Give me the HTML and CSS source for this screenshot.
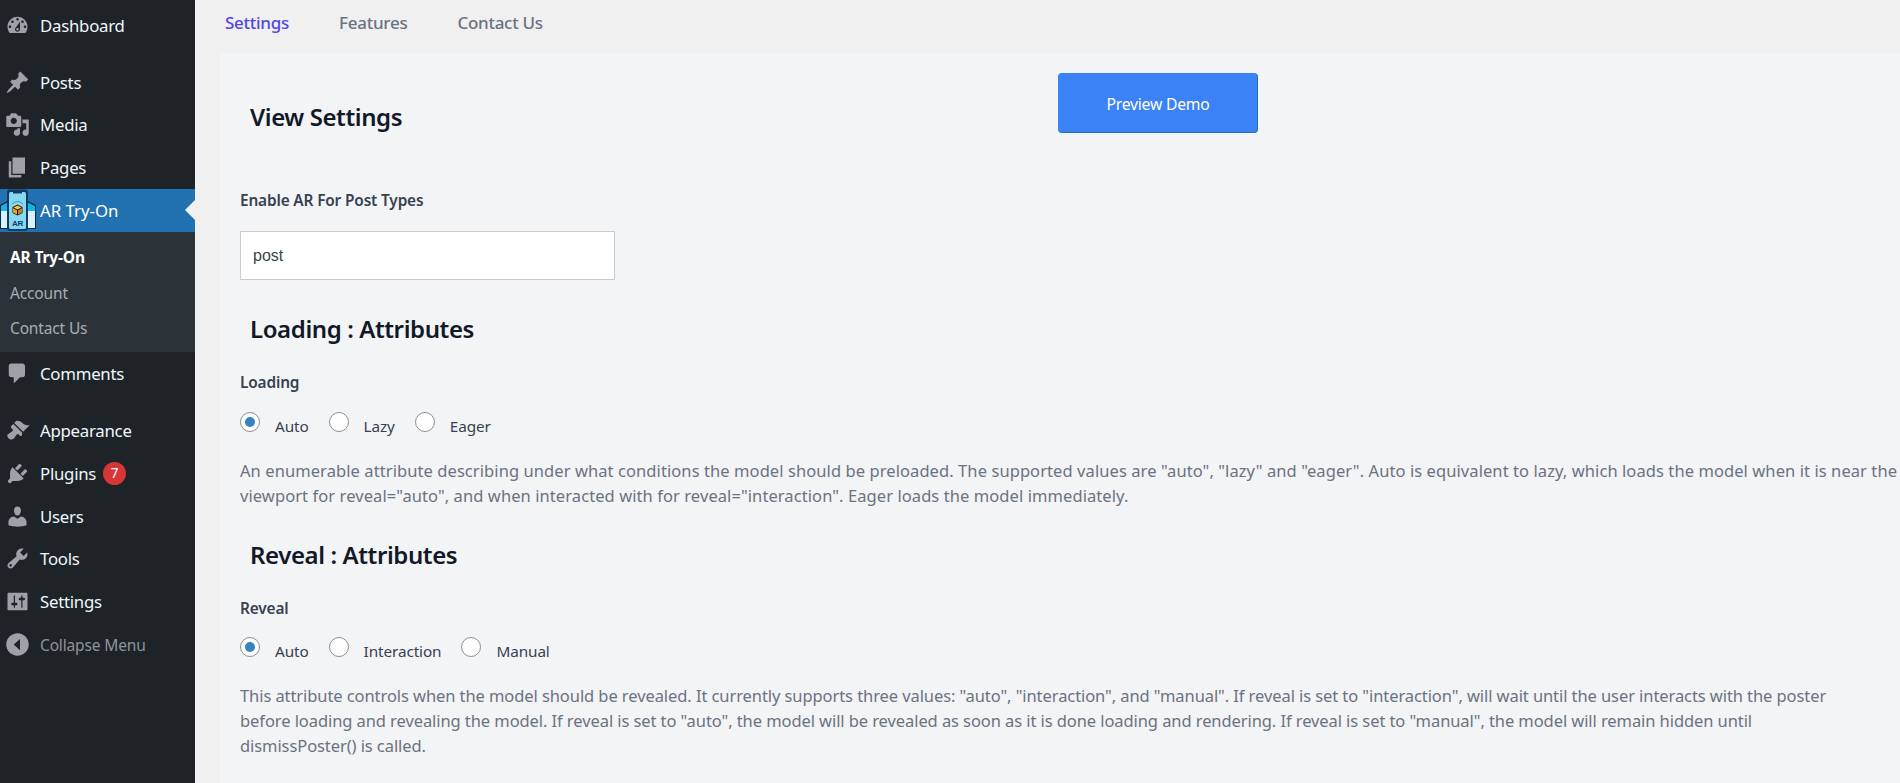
FILE: index.html
```html
<!DOCTYPE html>
<html lang="en">
<head>
<meta charset="utf-8">
<title>AR Try-On</title>
<link rel="stylesheet" href="styles.css">
</head>
<body>
<div class="shell">
  <nav class="sidebar">
    <ul class="menu">
      <li class="item sep-after"><svg class="ico" viewBox="0 0 20 20"><path fill-rule="evenodd" d="M3.76 16h12.48c1.1-1.37 1.76-3.11 1.76-5 0-4.42-3.58-8-8-8s-8 3.58-8 8c0 1.89.66 3.63 1.76 5zM10 4c.55 0 1 .45 1 1s-.45 1-1 1-1-.45-1-1 .45-1 1-1zM6 6c.55 0 1 .45 1 1s-.45 1-1 1-1-.45-1-1 .45-1 1-1zm8 0c.55 0 1 .45 1 1s-.45 1-1 1-1-.45-1-1 .45-1 1-1zm-5.37 5.55L12 7v6c0 1.1-.9 2-2 2s-2-.9-2-2c0-.57.24-1.08.63-1.45zM4 10c.55 0 1 .45 1 1s-.45 1-1 1-1-.45-1-1 .45-1 1-1zm12 0c.55 0 1 .45 1 1s-.45 1-1 1-1-.45-1-1 .45-1 1-1zm-5 3c0-.55-.45-1-1-1s-1 .45-1 1 .45 1 1 1 1-.45 1-1z"/></svg><span>Dashboard</span></li>
      <li class="item"><svg class="ico" viewBox="0 0 20 20"><path d="M10.44 3.02l1.82-1.82 6.36 6.35-1.83 1.82c-1.05-.68-2.48-.57-3.41.36l-.75.75c-.92.93-1.04 2.35-.35 3.41l-1.83 1.82-2.41-2.41-2.8 2.79c-.42.42-3.38 2.71-3.8 2.29s1.86-3.39 2.28-3.81l2.79-2.79L4.1 9.36l1.83-1.82c1.05.69 2.48.57 3.4-.36l.75-.75c.93-.92 1.05-2.35.36-3.41z"/></svg><span>Posts</span></li>
      <li class="item"><svg class="ico" viewBox="0 0 20 20"><path fill-rule="evenodd" d="M13 11V4c0-.55-.45-1-1-1h-1.67L9 1H5L3.67 3H2c-.55 0-1 .45-1 1v7c0 .55.45 1 1 1h10c.55 0 1-.45 1-1zM7 4.5c1.38 0 2.5 1.12 2.5 2.5S8.38 9.5 7 9.5 4.5 8.38 4.5 7 5.62 4.5 7 4.5zM14 6h5v10.5c0 1.38-1.12 2.5-2.5 2.5S14 17.88 14 16.5s1.12-2.5 2.5-2.5c.17 0 .34.02.5.05V9h-3V6zm-4 8.05V13h2v3.5c0 1.38-1.12 2.5-2.5 2.5S7 17.88 7 16.5 8.12 14 9.5 14c.17 0 .34.02.5.05z"/></svg><span>Media</span></li>
      <li class="item"><svg class="ico" viewBox="0 0 20 20"><path d="M6 15V2h10v13H6zm-1 1h8v2H3V5h2v11z"/></svg><span>Pages</span></li>
      <li class="item current">
        <svg class="logo" viewBox="0 0 36 42">
          <path d="M7 12 0 16v24h7z" fill="#0b2a4a"/>
          <path d="M7 13.500 1 17v5h6z" fill="#12b5ea"/>
          <path d="M1 22h6v17H1z" fill="#d8f1fb"/>
          <path d="M28 12l8 4v24h-8z" fill="#0b2a4a"/>
          <path d="M28 13.500l7 3.500v5h-7z" fill="#12b5ea"/>
          <path d="M28 22h7v17h-7z" fill="#d8f1fb"/>
          <rect x="7" y="0.500" width="21" height="41.500" rx="3" fill="#123a66"/>
          <rect x="9" y="3" width="17" height="37" rx="1.500" fill="#86d8f1"/>
          <path d="M13 2h9v2.500h-9z" fill="#123a66"/>
          <path d="M12 15q5.500-5 11 0" fill="none" stroke="#5b8aa6" stroke-width="1"/>
          <path d="M17.500 15.500l5 2.500v6l-5 2.500-5-2.500v-6z" fill="#1f1a10"/>
          <path d="M17.500 16.500l4 2-4 2-4-2z" fill="#f5c14e"/>
          <path d="M13 19.300l4 2v4.200l-4-2z" fill="#e8a317"/>
          <path d="M22 19.300l-4 2v4.200l4-2z" fill="#c08316"/>
          <text class="logo-text" x="17.500" y="37" text-anchor="middle">AR</text>
        </svg>
        <span>AR Try-On</span>
        <i class="notch"></i>
      </li>
      <li class="sub">
        <a class="sub-link on">AR Try-On</a>
        <a class="sub-link">Account</a>
        <a class="sub-link">Contact Us</a>
      </li>
      <li class="item sep-wide"><svg class="ico" viewBox="0 0 20 20"><path d="M5 2h9c1.100 0 2 .9 2 2v7c0 1.100-.9 2-2 2h-2l-5 5v-5H5c-1.100 0-2-.9-2-2V4c0-1.100.9-2 2-2z"/></svg><span>Comments</span></li>
      <li class="item"><svg class="ico" viewBox="0 0 20 20"><path d="M14.480 11.060L7.410 3.990l1.500-1.500c.5-.56 2.300-.47 3.510.32 1.210.8 1.430 1.280 2.910 2.100 1.180.64 2.450 1.260 4.450.85zm-.71.71L6.700 4.700 4.930 6.470c-.39.39-.39 1.020 0 1.410l1.060 1.060c.39.39.39 1.030 0 1.420-.6.6-1.430 1.110-2.210 1.690-.35.26-.7.53-1.010.84C1.430 13.230 1.600 15 2.790 16.200s2.970 1.370 4.210.13c.31-.31.58-.66.84-1.010.58-.78 1.090-1.610 1.690-2.210.39-.39 1.030-.39 1.420 0l1.060 1.060c.39.39 1.020.39 1.410 0z"/></svg><span>Appearance</span></li>
      <li class="item"><svg class="ico" viewBox="0 0 20 20"><path d="M13.110 4.360L9.870 7.600 8 5.730l3.240-3.240c.35-.34 1.050-.2 1.560.32.52.51.66 1.210.31 1.550zm-8 1.770l.91-1.120 9.010 9.010-1.190.84c-.71.71-2.630 1.160-3.820 1.160H6.140L4.900 17.260c-.59.59-1.540.59-2.120 0-.59-.58-.59-1.530 0-2.120l1.240-1.240v-3.880c0-1.130.4-3.190 1.090-3.890zm7.260 3.970l3.240-3.240c.34-.35 1.040-.21 1.550.31.52.51.66 1.210.31 1.550l-3.240 3.250z"/></svg><span>Plugins</span><b class="badge">7</b></li>
      <li class="item"><svg class="ico" viewBox="0 0 20 20"><path d="M10 9.250c-2.270 0-2.730-3.440-2.730-3.440C7 4.020 7.820 2 9.970 2c2.160 0 2.980 2.020 2.710 3.810 0 0-.41 3.440-2.680 3.440zm0 2.570L12.720 10c2.390 0 4.520 2.330 4.520 4.530v2.490s-3.650 1.130-7.240 1.130c-3.650 0-7.240-1.130-7.240-1.130v-2.490c0-2.250 1.940-4.480 4.470-4.480z"/></svg><span>Users</span></li>
      <li class="item"><svg class="ico" viewBox="0 0 20 20"><path fill-rule="evenodd" d="M16.680 9.770c-1.340 1.340-3.300 1.670-4.950.99l-5.410 6.520c-.99.99-2.590.99-3.580 0s-.99-2.590 0-3.570l6.520-5.420c-.68-1.650-.35-3.610.99-4.950 1.280-1.280 3.120-1.620 4.720-1.060l-2.890 2.890 2.820 2.820 2.860-2.870c.53 1.580.18 3.390-1.080 4.650zM3.810 16.210c.4.39 1.040.39 1.430 0 .4-.4.4-1.040 0-1.430-.39-.4-1.030-.4-1.430 0-.39.39-.39 1.030 0 1.430z"/></svg><span>Tools</span></li>
      <li class="item"><svg class="ico" viewBox="0 0 20 20"><path fill-rule="evenodd" d="M18 16V4c0-.55-.45-1-1-1H3c-.55 0-1 .45-1 1v12c0 .55.45 1 1 1h14c.55 0 1-.45 1-1zM8 11h1c.55 0 1 .45 1 1s-.45 1-1 1H8v1.500c0 .28-.22.5-.5.5s-.5-.22-.5-.5V13H6c-.55 0-1-.45-1-1s.45-1 1-1h1V5.500c0-.28.22-.5.5-.5s.5.22.5.5V11zm5-2h-1c-.55 0-1-.45-1-1s.45-1 1-1h1V5.500c0-.28.22-.5.5-.5s.5.22.5.5V7h1c.55 0 1 .45 1 1s-.45 1-1 1h-1v5.500c0 .28-.22.5-.5.5s-.5-.22-.5-.5V9z"/></svg><span>Settings</span></li>
      <li class="item collapse"><svg class="ico" viewBox="0 0 20 20"><path fill-rule="evenodd" d="M10 19c5 0 9-4 9-9s-4-9-9-9-9 4-9 9 4 9 9 9zm2-4.500L7 10l5-4.500v9z"/></svg><span>Collapse Menu</span></li>
    </ul>
  </nav>

  <main class="main">
    <div class="tabs">
      <a class="tab active">Settings</a>
      <a class="tab">Features</a>
      <a class="tab">Contact Us</a>
    </div>
    <section class="panel">
      <div class="top">
        <h2 class="title first">View Settings</h2>
        <button class="demo" type="button">Preview Demo</button>
      </div>
      <label class="field post-types">Enable AR For Post Types</label>
      <input class="text-input" type="text" value="post">

      <h2 class="title loading">Loading : Attributes</h2>
      <label class="field">Loading</label>
      <div class="radios">
        <label class="opt"><input type="radio" name="loading" checked><span>Auto</span></label>
        <label class="opt"><input type="radio" name="loading"><span>Lazy</span></label>
        <label class="opt"><input type="radio" name="loading"><span>Eager</span></label>
      </div>
      <p class="desc desc-wide">An enumerable attribute describing under what conditions the model should be preloaded. The supported values are "auto", "lazy" and "eager". Auto is equivalent to lazy, which loads the model when it is near the<br>viewport for reveal="auto", and when interacted with for reveal="interaction". Eager loads the model immediately.</p>

      <h2 class="title reveal">Reveal : Attributes</h2>
      <label class="field">Reveal</label>
      <div class="radios">
        <label class="opt"><input type="radio" name="reveal" checked><span>Auto</span></label>
        <label class="opt"><input type="radio" name="reveal"><span>Interaction</span></label>
        <label class="opt"><input type="radio" name="reveal"><span>Manual</span></label>
      </div>
      <p class="desc">This attribute controls when the model should be revealed. It currently supports three values: "auto", "interaction", and "manual". If reveal is set to "interaction", will wait until the user interacts with the poster<br>before loading and revealing the model. If reveal is set to "auto", the model will be revealed as soon as it is done loading and rendering. If reveal is set to "manual", the model will remain hidden until<br>dismissPoster() is called.</p>
    </section>
  </main>
</div>
</body>
</html>
```

FILE: styles.css
```css
* { box-sizing: border-box; }
html, body { margin: 0; height: 783px; overflow: hidden; }
body { background: #f0f0f1; font-family: "Noto Sans", "Open Sans", sans-serif; }
.shell { display: flex; height: 783px; }

.sidebar { flex: 0 0 195px; background: #1d2327; }
.menu { list-style: none; margin: 0; padding: 4px 0 0; }
.item { position: relative; display: flex; align-items: center; height: 42.7px; color: #f0f6fc; font-size: 16.8px; letter-spacing: -0.25px; }
.item > span { margin-left: 10px; }
.sep-after { margin-bottom: 14px; }
.sep-wide { margin-bottom: 15px; }
.ico { flex: none; width: 25px; height: 25px; margin-left: 5px; fill: #9ca2a7; }
.current { background: #2271b1; color: #fff; height: 43px; }
.logo { flex: none; width: 36px; height: 42px; margin-left: 0; margin-right: -6px; }
.logo-text { font: 700 8px "Liberation Sans", sans-serif; fill: #123a66; }
.notch { position: absolute; right: 0; top: 50%; margin-top: -10px; border: 10px solid transparent; border-left: 0; border-right-color: #f0f0f1; }
.current > span { letter-spacing: 0; }
.sub { background: #2c3338; height: 120px; padding-top: 8px; display: flex; flex-direction: column; }
.sub-link { height: 35.5px; padding-left: 10px; line-height: 35px; font-size: 15.5px; letter-spacing: -0.15px; color: #a9adb1; }
.sub-link.on { color: #fff; font-weight: 700; height: 36px; }
.badge { margin-left: 7px; width: 23px; height: 23px; border-radius: 50%; background: #d63638; color: #fff; font-weight: 400; font-size: 13.5px; line-height: 23px; text-align: center; letter-spacing: 0; }
.collapse { color: #8f9499; font-size: 15.5px; letter-spacing: -0.15px; }
.collapse > span { position: relative; top: 1px; }

.main { flex: 1; min-width: 0; padding-left: 25px; }
.tabs { display: flex; height: 53px; gap: 50px; align-items: flex-start; padding: 10px 0 0 5px; line-height: 26px; font-size: 17px; font-weight: 500; letter-spacing: -0.27px; color: #6b7280; }
.tab.active { color: #4f46e5; }
.panel { height: 730px; background: #f3f4f6; padding: 20px 0 0 20px; }
.top { display: flex; height: 60px; }
.title { margin: 0; padding-left: 10px; font-size: 24px; line-height: 32px; font-weight: 600; color: #111827; letter-spacing: -0.4px; }
.title.first { flex: 0 0 818px; margin-top: 28px; }
.demo { width: 200px; height: 60px; background: #3b82f6; color: #fff; border: 1px solid #2271b1; border-top-color: #3b82f6; border-left-color: #3b82f6; border-radius: 4px; font: 400 15.7px "Noto Sans", sans-serif; letter-spacing: -0.2px; padding-top: 2px; }
.field { display: block; height: 20px; line-height: 22px; font-size: 15.4px; font-weight: 600; color: #374151; letter-spacing: -0.15px; }
.post-types { margin-top: 57px; }
.text-input { display: block; width: 375px; height: 49px; margin: 21px 0 0; padding: 0 12px; background: #fff; border: 1px solid #c9cbce; border-radius: 0; font: 16px "Liberation Sans", sans-serif; color: #3c434a; }
.loading { margin-top: 33px; }
.reveal { margin-top: 31px; }
.title + .field { margin-top: 27px; }
.radios { display: flex; gap: 20px; height: 24px; margin-top: 18px; }
.title.reveal + .field + .radios { margin-top: 17px; }
.opt { display: flex; align-items: flex-start; gap: 15px; font-size: 15.3px; letter-spacing: -0.1px; color: #374151; line-height: 24px; }
.opt span { position: relative; top: 4px; }
.opt input { appearance: none; flex: none; width: 20px; height: 20px; margin: 2px 0 0; background: #fff; border: 1px solid #8c8f94; border-radius: 50%; position: relative; }
.opt input:checked::before { content: ""; position: absolute; left: 4px; top: 4px; width: 10px; height: 10px; border-radius: 50%; background: #3582c4; }
.desc { margin: 24px 0 0; font-size: 16.5px; line-height: 25px; color: #6b7280; letter-spacing: -0.08px; }
.desc-wide { letter-spacing: 0.08px; }
```
